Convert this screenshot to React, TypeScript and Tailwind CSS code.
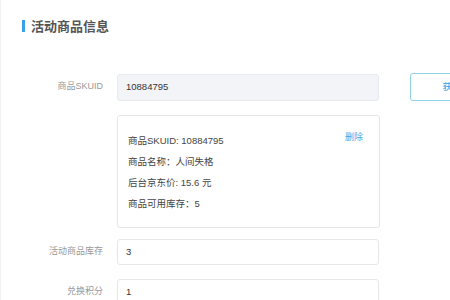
const FONT = "font-['Liberation_Sans','Noto_Sans_CJK_SC',sans-serif]";

const CARD_LINES = [
  '商品SKUID: 10884795',
  '商品名称：人间失格',
  '后台京东价: 15.6 元',
  '商品可用库存：5',
];

const Label = ({ text }: { text: string }) => (
  <div className="w-[102px] shrink-0 text-right text-[9px] text-[#999]">{text}</div>
);

const App = () => {
  return (
    <div className={`${FONT} w-[450px] h-[300px] overflow-hidden bg-white relative border-l border-[#f2f2f2]`}>
      {/* Section title */}
      <div className="flex items-center h-[12px] mt-[20px] ml-[21px]">
        <div className="w-[3px] h-[12px] bg-[#3aa0e8]" />
        <div className="ml-[6px] text-[13px] font-bold text-[#555] leading-none">活动商品信息</div>
      </div>

      {/* SKUID row */}
      <div className="flex items-center mt-[41px]">
        <Label text="商品SKUID" />
        <div className="ml-[14px] w-[262px] h-[27px] shrink-0 rounded-[3px] border border-[#e8e9ee] bg-[#f3f4f8] flex items-center pl-[8px] text-[9.5px] text-[#333]">
          10884795
        </div>
        <button className="ml-[31px] w-[84px] h-[28px] shrink-0 rounded-[3px] border border-[#8fd3e2] bg-white text-[9.5px] text-[#3c9ee5]">
          获取
        </button>
      </div>

      {/* Product card */}
      <div className="flex mt-[14px]">
        <div className="w-[102px] shrink-0" />
        <div className="ml-[14px] w-[263px] h-[113px] shrink-0 rounded-[3px] border border-[#e6e6e6] relative pt-[14px] pl-[10px]">
          {CARD_LINES.map(line => (
            <div key={line} className="text-[9.5px] leading-[21px] text-[#444]">{line}</div>
          ))}
          <span className="absolute top-[15px] right-[16px] text-[9px] leading-[12px] text-[#4aa3e8]">删除</span>
        </div>
      </div>

      {/* Stock row */}
      <div className="flex items-center mt-[11px]">
        <Label text="活动商品库存" />
        <div className="ml-[14px] w-[262px] h-[26px] shrink-0 rounded-[3px] border border-[#e6e6e6] flex items-center pl-[8px] text-[9.5px] text-[#333]">
          3
        </div>
      </div>

      {/* Points row */}
      <div className="flex items-center mt-[14px]">
        <Label text="兑换积分" />
        <div className="ml-[14px] w-[262px] h-[26px] shrink-0 rounded-[3px] border border-[#e6e6e6] flex items-center pl-[8px] text-[9.5px] text-[#333]">
          1
        </div>
      </div>
    </div>
  );
};

export default App;
